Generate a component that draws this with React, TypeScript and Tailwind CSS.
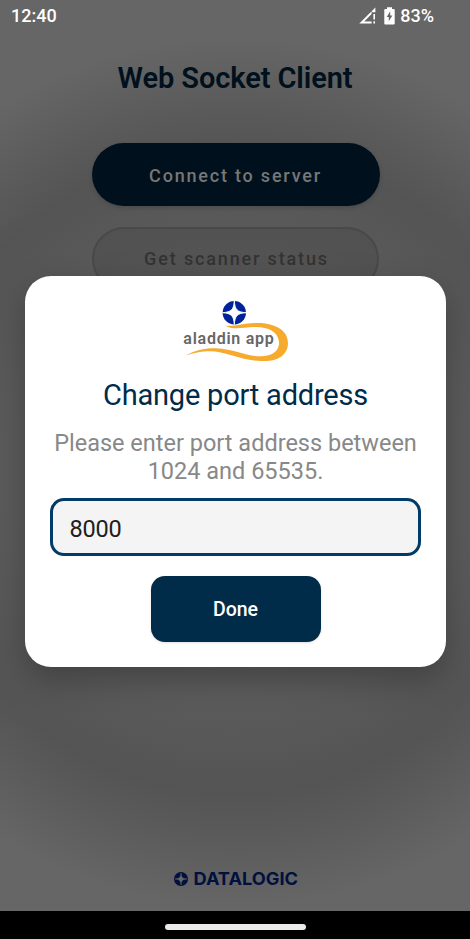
import React from "react";

function StatusBar() {
  return (
    <header className="flex h-8 w-full shrink-0 items-center pl-[11px] pr-9 text-[18px] font-medium leading-8 text-white">
      <span>12:40</span>
      <svg className="ml-auto h-[18px] w-[18px]" viewBox="0 0 18 18" fill="none">
        <path d="M.3 16.600L12.600 4.300V7L5.200 14.400H12.600V16.600z" fill="#fff" />
        <path d="M13.100 3.800L16.400.5V5.200H13.100z" fill="#fff" />
        <path d="M15.200 7V12.500M15.200 14.300V16.500" stroke="#fff" strokeWidth="1.600" />
      </svg>
      <svg className="ml-[7px] h-[18px] w-[11px]" viewBox="0 0 11 18">
        <path
          fillRule="evenodd"
          fill="#fff"
          d="M3 .2h5V2h1.800c.5 0 .9.4.9.9v13.700c0 .5-.4.9-.9.9H1.200c-.5 0-.9-.4-.9-.9V2.900c0-.5.4-.9.9-.9H3zM6.200 4.200L2.700 9.900H4.800V14.200L8.400 8.500H6.200z"
        />
      </svg>
      <span className="ml-[5px]">83%</span>
    </header>
  );
}

function AladdinLogo() {
  return (
    <svg className="h-[64px] w-[108px] shrink-0" viewBox="0 0 108 64">
      <circle cx="52.300" cy="12.700" r="11.700" fill="#00239c" />
      <path
        d="M52.300 1C52.900 9.700 55.300 12.100 64 12.700C55.300 13.300 52.900 15.700 52.300 24.400C51.700 15.700 49.300 13.300 40.600 12.700C49.300 12.100 51.700 9.700 52.300 1Z"
        fill="#fff"
        stroke="#fff"
        strokeWidth=".9"
      />
      <path
        d="M43 24.900C48 27.800 60 23 73 22.900C94 22.500 106 30.500 106 43C106 55.500 95 62 79 61C56 60 42 50 25 51.300C17 51.700 11 53.300 3 55.800C14 49.500 24 47.800 34 48.200C54 49 64 57 80 56.200C92 55.500 97.500 49.500 97 42C96 31.500 86 26.700 72 27.100C60 27.500 50 30.500 43 24.900Z"
        fill="#f7ab2e"
      />
      <text x="1.300" y="44" textLength="90.500" lengthAdjust="spacing" fill="#666" className="font-[Roboto,sans-serif] text-[16px] font-semibold">
        aladdin app
      </text>
    </svg>
  );
}

function DatalogicLogo() {
  return (
    <svg className="h-6 w-[126px] overflow-visible" viewBox="0 0 126 24">
      <circle cx="9" cy="12" r="7" fill="#00103f" />
      <path d="M9 6C9.300 10.500 10.500 11.700 15 12C10.500 12.300 9.300 13.500 9 18C8.700 13.500 7.500 12.300 3 12C7.500 11.700 8.700 10.500 9 6Z" fill="#666" stroke="#666" strokeWidth=".5" />
      <text x="21.500" y="18.400" textLength="104.500" lengthAdjust="spacingAndGlyphs" fill="#00103f" className="font-[Inter,sans-serif] text-[17.500px] font-bold">
        DATALOGIC
      </text>
    </svg>
  );
}

function PortDialog() {
  return (
    <div className="absolute inset-x-6 top-[276px] ml-px flex h-[391px] flex-col items-center rounded-[26px] bg-white px-[26px] pt-6 shadow-[0_12px_32px_rgba(0,0,0,0.28)]">
      <AladdinLogo />
      <h2 className="mt-[14px] text-[29px] leading-[34px] tracking-[-0.2px] text-[#002b49]">Change port address</h2>
      <p className="mt-[18px] w-[370px] text-center text-[23.500px] leading-[27.500px] text-[#888]">
        Please enter port address between 1024 and 65535.
      </p>
      <input
        aria-label="Port"
        defaultValue="8000"
        className="mt-[13px] h-[58px] w-[371px] shrink-0 rounded-[14px] border-3 border-[#003c69] bg-[#f4f4f4] px-[16.500px] pt-[3px] text-[23.500px] tracking-[-0.2px] text-[#202020] outline-none"
      />
      <button className="mt-5 h-[66px] w-[170px] shrink-0 rounded-[14px] bg-[#002b49] pt-0.5 text-[19.500px] font-medium text-white shadow-sm">
        Done
      </button>
    </div>
  );
}

export default function App() {
  return (
    <div className="relative flex h-[939px] w-[470px] flex-col overflow-hidden bg-black font-[Roboto,sans-serif]">
      <main className="flex h-[911px] flex-col items-center bg-[radial-gradient(circle_at_235px_472px,#606060_0px,#5b5b5b_230px,#545454_320px,#595959_355px,#666666_435px)]">
        <StatusBar />
        <h1 className="mt-[29px] text-[29px] font-semibold leading-[34px] tracking-[-0.1px] text-[#00111d]">Web Socket Client</h1>
        <button className="ml-px mt-12 h-[63px] w-[288px] rounded-full bg-[#00111d] pt-0.5 text-[18px] font-medium tracking-[1.800px] text-[#777] shadow-[0_2px_4px_rgba(0,0,0,0.15)]">
          Connect to server
        </button>
        <button className="mt-[21px] h-[64px] w-[287px] rounded-full border-2 border-[#494949] bg-black/8 pb-0.5 pl-[3px] text-[18px] font-medium tracking-[1.850px] text-[#333]">
          Get scanner status
        </button>
        <div className="mb-5 mt-auto">
          <DatalogicLogo />
        </div>
      </main>
      <div className="flex h-7 items-center justify-center pt-1">
        <div className="h-[6px] w-[141px] rounded-full bg-[#ebebeb]" />
      </div>
      <PortDialog />
    </div>
  );
}
